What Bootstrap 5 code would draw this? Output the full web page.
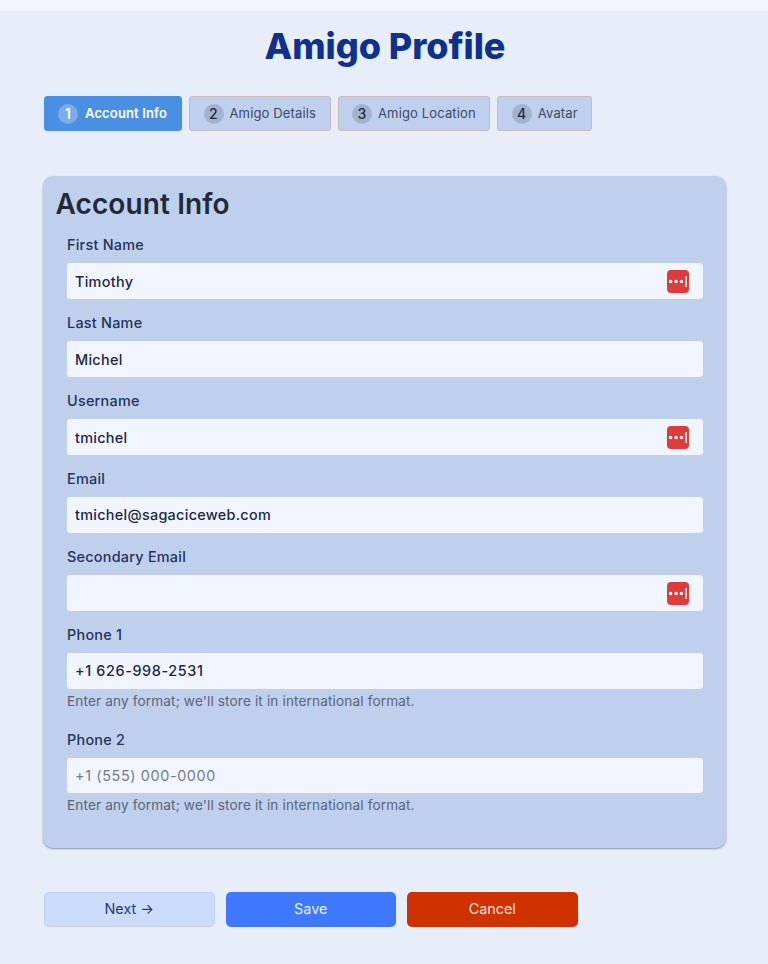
<!DOCTYPE html>
<html lang="en">
<head>
<meta charset="utf-8">
<title>Amigo Profile</title>
<link href="https://cdn.jsdelivr.net/npm/bootstrap@5.3.0/dist/css/bootstrap.min.css" rel="stylesheet">
<style>
html,body{height:100%}
body{font-family:"Inter","Liberation Sans",sans-serif;background:#f0f5ff;color:#212a3b;overflow:hidden}
.page-shell{margin-top:10.5px;background:#e7eefa;height:954px;padding:13.5px 42px 0 44px}
.page-title{font-size:36px;font-weight:800;color:#0d318c;text-align:center;line-height:44px;margin:0;letter-spacing:-.05px}
.step-row{margin-top:28px;gap:7px}
.step-tab{height:35px;display:flex;align-items:center;gap:6px;padding:0 13.5px;border-radius:3px;border:1px solid #c9b9bb;background:#bfd0ee;color:#3d4a66;font-size:13px;font-weight:400;letter-spacing:.14px}
.step-tab.on{background:#4a90e2;border-color:#4a90e2;color:#fff;font-weight:600;gap:7px;padding:0 13px;width:138px}
.step-num{width:20px;height:20px;flex:none;border-radius:50%;background:#a4b3cd;color:#1d2b46;display:flex;align-items:center;justify-content:center;font-size:14px;font-weight:500}
.on .step-num{background:#7aacea;color:#fff;font-weight:600}
.form-panel{margin:45px 0 0 -1px;height:672px;background:#bfd0ed;border-radius:10px;box-shadow:0 1px 2px rgba(60,75,105,.55);padding:11px 23px 0 12.5px}
.panel-title{font-size:28px;font-weight:600;line-height:34px;color:#212a3b;margin:0 0 14.4px;letter-spacing:.1px}
.field-wrap{padding-left:11.5px}
.field-label{display:block;font-size:14.4px;font-weight:500;color:#24345a;line-height:20px;margin:0 0 8px;letter-spacing:.25px}
.field-box{position:relative;margin-bottom:14.7px}
.field-input{display:block;width:100%;height:35.3px;border:0;border-radius:3px;background:#f0f5ff;padding:0 8px;font:500 14.4px "Inter","Liberation Sans",sans-serif;color:#1c2740;outline:0;letter-spacing:.3px}
.phone-val{letter-spacing:.62px}
.field-input::placeholder{color:#757c88;font-weight:400}
.pw-icon{position:absolute;right:14px;top:7px;width:22px;height:23px}
.field-help{font-size:13.6px;color:#5a6579;line-height:16px;margin:-10.6px 0 21.3px;letter-spacing:.14px}
.action-row{margin-top:43.5px;gap:11px}
.act-btn{width:170.5px;height:35px;border-radius:5px;font-size:14.4px;border:1px solid transparent;display:flex;align-items:center;justify-content:center;padding:0}
.act-next{background:#ccdcfb;border-color:#bdd0f2;color:#263b78}
.act-save{background:#3d78ff;color:#e9f0ff}
.act-cancel{background:#cf3100;color:#fbe6df}
</style>
</head>
<body>
<div class="page-shell">
  <h1 class="page-title">Amigo Profile</h1>
  <div class="d-flex step-row">
    <div class="step-tab on"><span class="step-num">1</span>Account Info</div>
    <div class="step-tab"><span class="step-num">2</span>Amigo Details</div>
    <div class="step-tab"><span class="step-num">3</span>Amigo Location</div>
    <div class="step-tab"><span class="step-num">4</span>Avatar</div>
  </div>
  <div class="form-panel">
    <h2 class="panel-title">Account Info</h2>
    <div class="field-wrap">
      <label class="field-label">First Name</label>
      <div class="field-box"><input class="field-input" value="Timothy"><svg class="pw-icon" viewBox="0 0 22 23"><rect width="22" height="23" rx="4" fill="#de3b3b"/><circle cx="3.6" cy="11.5" r="1.7" fill="#fff"/><circle cx="9" cy="11.5" r="1.7" fill="#fff"/><circle cx="14.4" cy="11.5" r="1.7" fill="#fff"/><rect x="18.4" y="6" width="1.4" height="11" fill="#fff"/></svg></div>
      <label class="field-label">Last Name</label>
      <div class="field-box"><input class="field-input" value="Michel"></div>
      <label class="field-label">Username</label>
      <div class="field-box"><input class="field-input" value="tmichel"><svg class="pw-icon" viewBox="0 0 22 23"><rect width="22" height="23" rx="4" fill="#de3b3b"/><circle cx="3.6" cy="11.5" r="1.7" fill="#fff"/><circle cx="9" cy="11.5" r="1.7" fill="#fff"/><circle cx="14.4" cy="11.5" r="1.7" fill="#fff"/><rect x="18.4" y="6" width="1.4" height="11" fill="#fff"/></svg></div>
      <label class="field-label">Email</label>
      <div class="field-box"><input class="field-input" value="tmichel@sagaciceweb.com"></div>
      <label class="field-label">Secondary Email</label>
      <div class="field-box"><input class="field-input" value=""><svg class="pw-icon" viewBox="0 0 22 23"><rect width="22" height="23" rx="4" fill="#de3b3b"/><circle cx="3.6" cy="11.5" r="1.7" fill="#fff"/><circle cx="9" cy="11.5" r="1.7" fill="#fff"/><circle cx="14.4" cy="11.5" r="1.7" fill="#fff"/><rect x="18.4" y="6" width="1.4" height="11" fill="#fff"/></svg></div>
      <label class="field-label">Phone 1</label>
      <div class="field-box"><input class="field-input phone-val" value="+1 626-998-2531"></div>
      <div class="field-help">Enter any format; we'll store it in international format.</div>
      <label class="field-label">Phone 2</label>
      <div class="field-box"><input class="field-input phone-val" placeholder="+1 (555) 000-0000"></div>
      <div class="field-help">Enter any format; we'll store it in international format.</div>
    </div>
  </div>
  <div class="d-flex action-row">
    <button class="btn act-btn act-next">Next →</button>
    <button class="btn act-btn act-save">Save</button>
    <button class="btn act-btn act-cancel">Cancel</button>
  </div>
</div>
<script src="https://cdn.jsdelivr.net/npm/bootstrap@5.3.0/dist/js/bootstrap.bundle.min.js"></script>
</body>
</html>
